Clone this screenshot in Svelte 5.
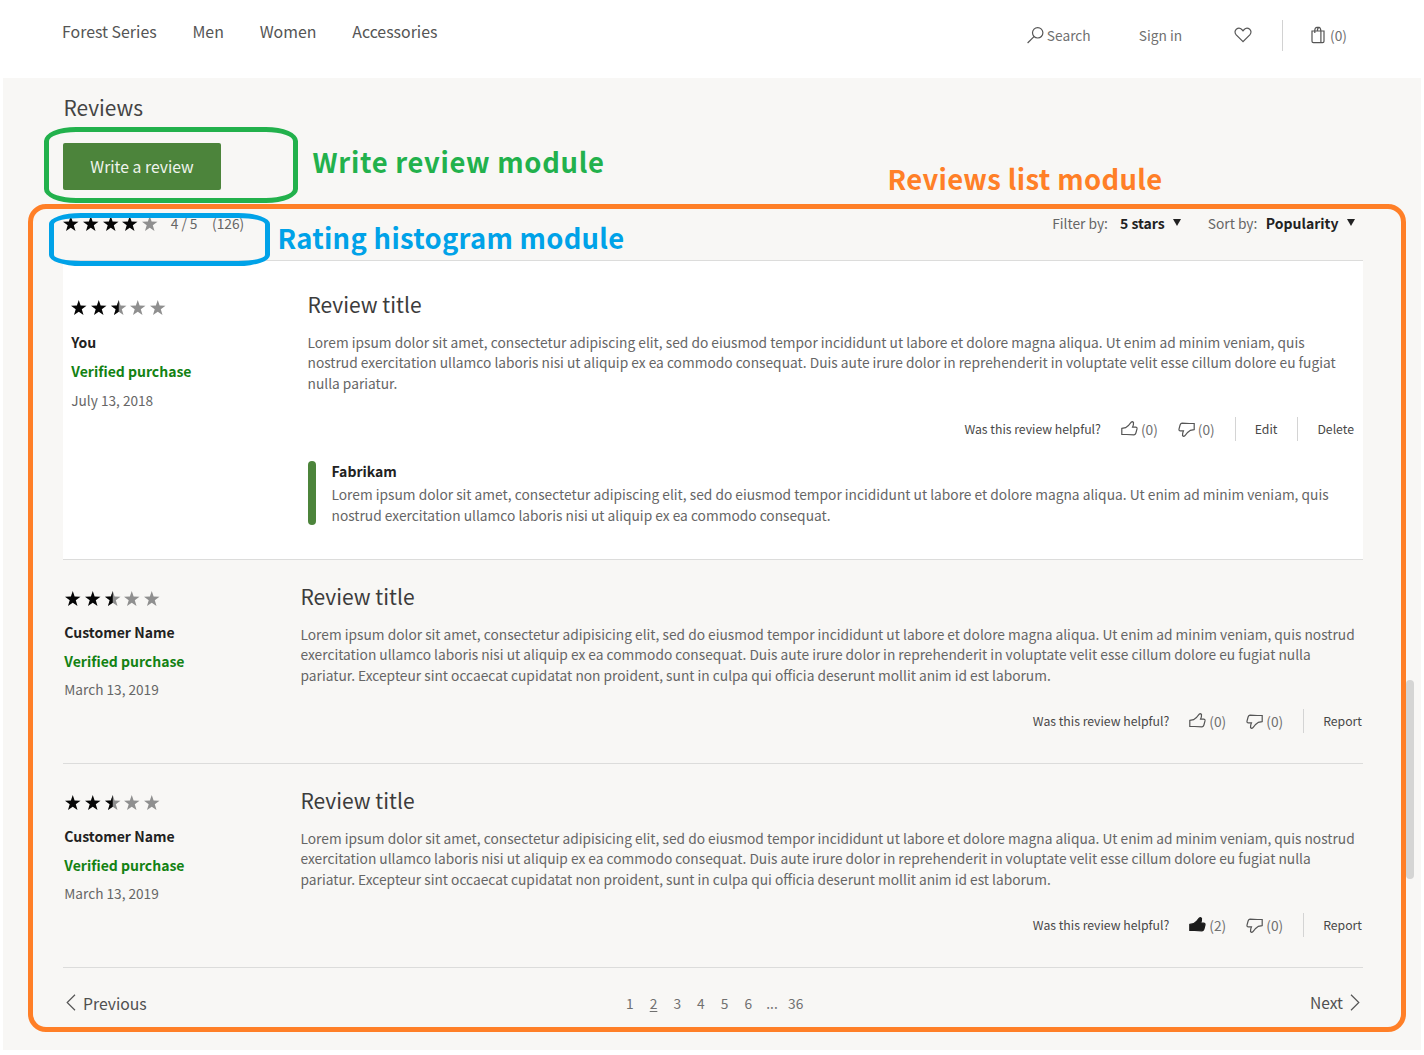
<script>
  const nav = ['Forest Series', 'Men', 'Women', 'Accessories'];
  const pages = ['1', '2', '3', '4', '5', '6', '...', '36'];

  const customerLines = [
    'Lorem ipsum dolor sit amet, consectetur adipisicing elit, sed do eiusmod tempor incididunt ut labore et dolore magna aliqua. Ut enim ad minim veniam, quis nostrud',
    'exercitation ullamco laboris nisi ut aliquip ex ea commodo consequat. Duis aute irure dolor in reprehenderit in voluptate velit esse cillum dolore eu fugiat nulla',
    'pariatur. Excepteur sint occaecat cupidatat non proident, sunt in culpa qui officia deserunt mollit anim id est laborum.'
  ];

  const reviews = [
    {
      mine: true,
      name: 'You',
      date: 'July 13, 2018',
      lines: [
        'Lorem ipsum dolor sit amet, consectetur adipiscing elit, sed do eiusmod tempor incididunt ut labore et dolore magna aliqua. Ut enim ad minim veniam, quis',
        'nostrud exercitation ullamco laboris nisi ut aliquip ex ea commodo consequat. Duis aute irure dolor in reprehenderit in voluptate velit esse cillum dolore eu fugiat',
        'nulla pariatur.'
      ],
      up: 0,
      down: 0,
      voted: false,
      actions: ['Edit', 'Delete'],
      reply: {
        author: 'Fabrikam',
        lines: [
          'Lorem ipsum dolor sit amet, consectetur adipiscing elit, sed do eiusmod tempor incididunt ut labore et dolore magna aliqua. Ut enim ad minim veniam, quis',
          'nostrud exercitation ullamco laboris nisi ut aliquip ex ea commodo consequat.'
        ]
      }
    },
    { mine: false, name: 'Customer Name', date: 'March 13, 2019', lines: customerLines, up: 0, down: 0, voted: false, actions: ['Report'], reply: null },
    { mine: false, name: 'Customer Name', date: 'March 13, 2019', lines: customerLines, up: 2, down: 0, voted: true, actions: ['Report'], reply: null }
  ];

  const starPath = 'M7.25 0 L9 5.1 L14.5 5.3 L10.1 8.6 L11.7 14.1 L7.25 10.9 L2.8 14.1 L4.4 8.6 L0 5.3 L5.5 5.1 Z';
  const halfPath = 'M7.25 0 L7.25 10.9 L2.8 14.1 L4.4 8.6 L0 5.3 L5.5 5.1 Z';
  const thumbPath =
    'M0.8 7.4 L4.6 6.7 L7.4 4.6 L10.2 1.2 Q11.4 0.2 12.5 1.4 Q12.7 3.8 11.6 6.1 L14.6 6.2 Q16.3 6.4 16 7.9 L14.9 12 Q14.5 13.6 13 13.8 L5.6 13.5 L0.8 13.5 Z';
</script>

{#snippet stars(value)}
  <span class="stars">
    {#each [1, 2, 3, 4, 5] as n}
      <svg class="star" viewBox="0 0 14.5 14.5">
        <path class={n <= value ? 'on' : 'off'} d={starPath} />
        {#if n > value && n - value < 1}<path class="on" d={halfPath} />{/if}
      </svg>
    {/each}
  </span>
{/snippet}

<div class="page">
  <header>
    <nav>
      {#each nav as item}<a href="#top">{item}</a>{/each}
    </nav>
    <div class="tools">
      <span class="search">
        <svg width="17" height="17" viewBox="0 0 17 17"><circle cx="10.7" cy="5.8" r="5.2" /><path d="M7 9.6 L0.6 16" /></svg>
        Search
      </span>
      <span class="signin">Sign in</span>
      <svg class="heart" width="18" height="16" viewBox="0 0 18 16"><path d="M9 14.7 L2.2 7.9 C0.5 6 0.7 3.6 2.3 2.2 C4 0.8 6.4 1 7.8 2.5 L9 3.8 L10.2 2.5 C11.6 1 14 0.8 15.7 2.2 C17.3 3.6 17.5 6 15.8 7.9 Z" /></svg>
      <span class="bag">
        <svg width="14" height="18" viewBox="0 0 14 18"><path d="M1 5 H13 V15.2 Q13 16.6 11.6 16.6 H2.4 Q1 16.6 1 15.2 Z M9.9 5 V16.6 M3.8 7 V4 Q4 1.5 6 1.3 H8 Q9.6 1.5 9.9 5 M6.4 5 Q6.4 1.8 8 1.4" /></svg>
        (0)
      </span>
    </div>
  </header>

  <section>
    <h2>Reviews</h2>
    <button>Write a review</button>

    <div class="toolbar">
      {@render stars(4)}
      <span class="score">4 / 5</span>
      <span class="total">(126)</span>
      <div class="filters">
        <span>Filter by:</span><b>5 stars</b><i class="caret"></i>
        <span class="sort">Sort by:</span><b class="by">Popularity</b><i class="caret"></i>
      </div>
    </div>

    {#each reviews as r}
      <article class:mine={r.mine}>
        <div class="who">
          {@render stars(2.5)}
          <div class="meta">
            <b>{r.name}</b>
            <b class="verified">Verified purchase</b>
            <span>{r.date}</span>
          </div>
        </div>
        <div class="content">
          <h3>Review title</h3>
          <p>{#each r.lines as line}<span class="line">{line}</span>{/each}</p>
          <div class="actions">
            <span>Was this review helpful?</span>
            <svg class="thumb" class:voted={r.voted} viewBox="0 0 17 15"><path d={thumbPath} /></svg>
            <span class="count">({r.up})</span>
            <svg class="thumb down" viewBox="0 0 17 15"><path d={thumbPath} /></svg>
            <span class="count">({r.down})</span>
            {#each r.actions as action}<span class="action">{action}</span>{/each}
          </div>
          {#if r.reply}
            <div class="reply">
              <b>{r.reply.author}</b>
              <p>{#each r.reply.lines as line}<span class="line">{line}</span>{/each}</p>
            </div>
          {/if}
        </div>
      </article>
    {/each}

    <footer>
      <span class="prev"><svg width="10" height="17" viewBox="0 0 10 17"><path d="M9 0.8 L1.2 8.5 L9 16.2" /></svg><span>Previous</span></span>
      <div class="pages">
        {#each pages as p}<span class:current={p === '2'}>{p}</span>{/each}
      </div>
      <span class="next">Next<svg width="10" height="17" viewBox="0 0 10 17"><path d="M1 0.8 L8.8 8.5 L1 16.2" /></svg></span>
    </footer>
  </section>

  <div class="scrollbar"></div>
  <div class="frame list"></div>
  <div class="frame write"></div>
  <div class="frame rating"></div>
  <div class="label write-label">Write review module</div>
  <div class="label list-label">Reviews list module</div>
  <div class="label rating-label">Rating histogram module</div>
</div>

<style>
  :global(body) { background: #fff; }
  .page {
    position: relative;
    width: 1424px;
    height: 1055px;
    overflow: hidden;
    box-sizing: border-box;
    font-family: "Noto Sans CJK SC", "Noto Sans", sans-serif;
    font-size: 13.75px;
    color: #666;
    white-space: nowrap;
  }
  svg { display: block; flex: none; fill: none; stroke: #555; stroke-width: 1.2; overflow: visible; }
  h2, h3, p { margin: 0; font-weight: 400; }
  b { color: #222; font-size: 14px; }

  header { display: flex; justify-content: space-between; height: 78px; padding: 19.5px 77px 0 62px; box-sizing: border-box; }
  nav { display: flex; gap: 35.8px; }
  nav a { font-size: 15.9px; line-height: 24px; height: 24px; color: #555; text-decoration: none; }
  .tools { display: flex; align-items: center; height: 31px; line-height: 24px; color: #707070; }
  .search, .bag { display: flex; align-items: center; }
  .search { gap: 2.5px; }
  .search svg, .bag svg { position: relative; top: 0.3px; }
  .search svg { left: -0.5px; }
  .signin { margin-left: 48px; }
  .heart { margin-left: 52px; }
  .bag { gap: 5px; height: 31px; margin-left: 30px; padding-left: 28px; border-left: 1px solid #d2d2d2; }

  section { height: 972px; margin: 0 3px; padding: 14px 58.5px 0 60px; box-sizing: border-box; background: #f8f7f5; }
  h2 { font-size: 20.9px; line-height: 30px; padding-left: 0.5px; color: #444; }
  button {
    display: block; width: 158px; height: 47.5px; margin-top: 20.5px; padding: 2px 0 0 0; border: 0; border-radius: 2px;
    background: #4c843b; color: #f0f5ee; font: 15.75px/24px "Noto Sans CJK SC", sans-serif;
  }
  .toolbar { display: flex; align-items: flex-start; height: 47px; margin-top: 23px; line-height: 20px; border-bottom: 1px solid #dcdcdb; }
  .stars { display: flex; gap: 4.3px; }
  .star { width: 15.5px; height: 15.5px; stroke: none; }
  .on { fill: #060606; }
  .off { fill: #8f8f8f; }
  .toolbar .stars { margin: 3.4px 0 0 0; }
  .score { margin-left: 13px; }
  .total { margin-left: 14.5px; }
  .filters { display: flex; align-items: center; height: 20px; margin: -0.5px 8px 0 auto; }
  .filters b { margin-left: 12px; }
  .filters .by { margin-left: 8.5px; }
  .filters .sort { margin-left: 27px; }
  .caret { margin-left: 8px; border: 4px solid transparent; border-top: 7px solid #222; border-bottom: 0; }

  article { display: grid; grid-template-columns: 237.5px 1fr; height: 204px; padding-top: 22.5px; box-sizing: border-box; border-bottom: 1px solid #dcdcdb; }
  article.mine { height: 298.5px; padding: 29px 8.5px 0 8px; grid-template-columns: 236.5px 1fr; background: #fff; }
  .who .stars { margin: 9.2px 0 0 2px; }
  .mine .who .stars { margin: 9.6px 0 0 0; }
  .meta { display: flex; flex-direction: column; margin: 11.2px 0 0 1.3px; line-height: 28.7px; }
  .meta span { font-size: 13.65px; }
  .mine .meta { margin: 13.4px 0 0 0.3px; }
  .verified { color: #138213; }
  h3 { font-size: 21px; line-height: 28px; color: #3c3c3c; }
  p { margin-top: 13.5px; line-height: 20.67px; }
  .line { display: block; }
  .actions { display: flex; justify-content: flex-end; align-items: center; margin-top: 23.5px; height: 24px; line-height: 24px; font-size: 12.25px; color: #484848; }
  article:not(.mine) .actions { padding-right: 0.5px; }
  .thumb { width: 17px; height: 15px; margin-left: 20px; position: relative; top: -0.5px; }
  .thumb.down { transform: rotate(180deg); top: 0.5px; }
  .thumb.voted path { fill: #1c1c1c; stroke: #1c1c1c; }
  .count { margin: -1px 0 0 3px; font-size: 13.75px; color: #707070; }
  .action { margin-left: 20px; padding-left: 19px; border-left: 1px solid #d4d4d4; }
  .reply { position: relative; margin-top: 19.5px; padding-left: 24px; line-height: 20.67px; }
  .reply::before { content: ""; position: absolute; left: 0; top: 0; bottom: 0; width: 8px; border-radius: 4px; background: #4c843b; }
  .reply p { margin-top: 2.8px; }

  footer { display: grid; grid-template-columns: 1fr auto 1fr; padding-top: 23.3px; line-height: 24px; font-size: 15.6px; color: #505050; }
  .prev, .next { display: flex; align-items: center; height: 24px; }
  .prev { gap: 7px; padding-left: 3px; }
  .prev span { font-size: 15.75px; padding-top: 2px; }
  .next { justify-content: flex-end; gap: 7px; padding-right: 2.5px; margin-top: -0.5px; }
  .pages { display: grid; grid-auto-flow: column; grid-auto-columns: 23.7px; font-size: 13.75px; text-align: center; color: #707070; }
  .current { text-decoration: underline; text-underline-offset: 2px; }

  .scrollbar { position: absolute; left: 1406px; top: 680px; width: 8px; height: 199px; border-radius: 4px; background: #d5d5d4; }
  .frame { position: absolute; box-sizing: border-box; border: 5px solid; }
  .list { left: 28px; top: 204px; width: 1378px; height: 828px; border-color: #ff7f27; border-radius: 18px; }
  .write { left: 44px; top: 127px; width: 254px; height: 76px; border-color: #22b14c; border-radius: 32px / 14px; }
  .rating { left: 49px; top: 213px; width: 221px; height: 53px; border-color: #00a2e8; border-radius: 32px / 11px; }
  .label { position: absolute; font-weight: 700; line-height: 40px; font-size: 27.4px; letter-spacing: 0.28px; }
  .write-label { left: 312.5px; top: 141px; color: #22b14c; letter-spacing: 0.7px; }
  .list-label { left: 887.5px; top: 158px; color: #ff7f27; letter-spacing: 0.36px; }
  .rating-label { left: 277.5px; top: 217px; color: #00a2e8; }
</style>
